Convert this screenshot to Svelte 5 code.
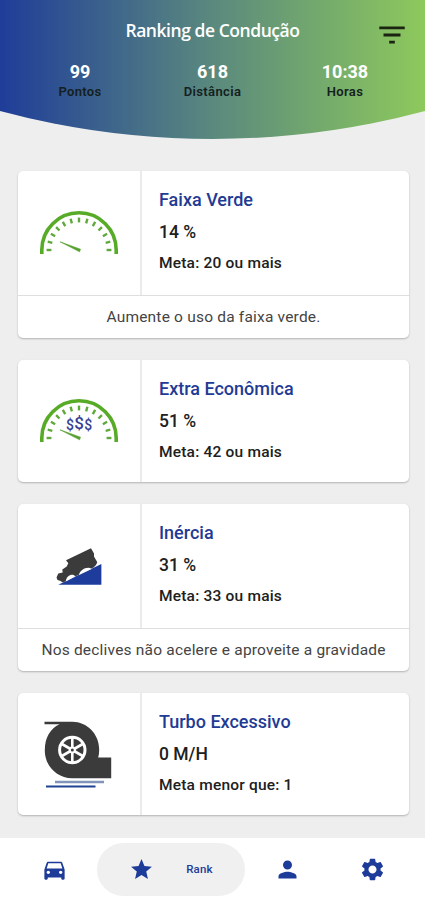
<script lang="ts">
    type Card = {
        icon: 'gauge' | 'economy' | 'slope' | 'turbo';
        title: string;
        value: string;
        goal: string;
        tip?: string;
    };

    const stats = [
        { value: '99', label: 'Pontos' },
        { value: '618', label: 'Distância' },
        { value: '10:38', label: 'Horas' },
    ];

    const cards: Card[] = [
        {
            icon: 'gauge',
            title: 'Faixa Verde',
            value: '14 %',
            goal: 'Meta: 20 ou mais',
            tip: 'Aumente o uso da faixa verde.',
        },
        { icon: 'economy', title: 'Extra Econômica', value: '51 %', goal: 'Meta: 42 ou mais' },
        {
            icon: 'slope',
            title: 'Inércia',
            value: '31 %',
            goal: 'Meta: 33 ou mais',
            tip: 'Nos declives não acelere e aproveite a gravidade',
        },
        { icon: 'turbo', title: 'Turbo Excessivo', value: '0 M/H', goal: 'Meta menor que: 1' },
    ];

    // 13 ticks, one every 15 degrees
    const ticks = Array.from({ length: 13 }, (_, i) => i * 15);
    const spokes = [0, 60, 120, 180, 240, 300];
</script>

<div class="screen">
    <header class="header">
        <div class="title-bar">
            <h1>Ranking de Condução</h1>
            <button class="filter" aria-label="Filtrar">
                <svg viewBox="0 0 24 24" width="34" height="34">
                    <path d="M10 18h4v-2h-4v2zM3 6v2h18V6H3zm3 7h12v-2H6v2z" />
                </svg>
            </button>
        </div>
        <div class="stats">
            {#each stats as stat}
                <div class="stat">
                    <strong>{stat.value}</strong>
                    <span>{stat.label}</span>
                </div>
            {/each}
        </div>
    </header>

    <main class="cards">
        {#each cards as card (card.title)}
            <section class="card">
                <div class="card-body" class:with-tip={card.tip}>
                    <div class="card-icon">
                        {#if card.icon === 'gauge' || card.icon === 'economy'}
                            <svg viewBox="0 0 80 46" width="80" height="46">
                                <path class="arc" d="M2.8 44V40a37.2 37.2 0 0 1 74.4 0v4" />
                                {#each ticks as angle}
                                    <path class="tick" d="M7.6 40h4.8" transform="rotate({angle} 40 40)" />
                                {/each}
                                <path class="needle" d="M21 31.8L41.5 39.2 40.6 41.8z" />
                                {#if card.icon === 'economy'}
                                    <text class="money" x="31" y="32" font-size="14">$</text>
                                    <text class="money" x="40" y="30.5" font-size="17">$</text>
                                    <text class="money" x="49.2" y="32" font-size="14">$</text>
                                {/if}
                            </svg>
                        {:else if card.icon === 'slope'}
                            <svg viewBox="0 0 48 40" width="48" height="40">
                                <path class="ramp" d="M3.3 38.8L46.4 18v20.800z" />
                                <path
                                    class="dark"
                                    d="M36 2.300L39 7.500V10.500L42.300 16.300 41 19 38.500 21.500 8 36.500 5 34.800 2.500 34 1.500 31.500 3.300 27.500 7.700 26.600 7.300 23.500 11.700 20.500 13.300 17.300 11 14.200z"
                                />
                                <g class="puffs">
                                    <path d="M10.800 35.400C11 29.800 18 26.600 20.400 30.600z" />
                                    <path d="M24 28.900C24.500 24 32.500 19.800 36.600 22.900z" />
                                </g>
                            </svg>
                        {:else}
                            <svg viewBox="0 0 70 67" width="70" height="67">
                                <path
                                    class="dark"
                                    d="M.5.8h27.800C43 .8 55.200 13 55.200 28.400q0 4.500-1 8h13v20.800H28C13 57.200.8 45 .8 29.500.8 16 6.500 7.500 15.500 3.200H.5z"
                                />
                                <circle class="rim" cx="28.300" cy="29" r="12.700" />
                                {#each spokes as angle}
                                    <path class="spoke" d="M28.300 29V17" transform="rotate({angle} 28.3 29)" />
                                {/each}
                                <circle class="hub" cx="28.300" cy="29" r="3.600" />
                                <circle class="dark" cx="28.300" cy="29" r="1.500" />
                                <path class="line-light" d="M11 61H60" />
                                <path class="line-blue" d="M2 65.500H51.500" />
                            </svg>
                        {/if}
                    </div>
                    <div class="card-text">
                        <h2>{card.title}</h2>
                        <p class="value">{card.value}</p>
                        <p class="goal">{card.goal}</p>
                    </div>
                </div>
                {#if card.tip}
                    <p class="tip">{card.tip}</p>
                {/if}
            </section>
        {/each}
    </main>

    <nav class="nav">
        <button aria-label="Veículo">
            <svg viewBox="0 0 24 24" width="27" height="27">
                <path
                    d="M18.920 6.010C18.720 5.420 18.160 5 17.500 5h-11c-.66 0-1.210.42-1.420 1.010L3 12v8c0 .55.45 1 1 1h1c.55 0 1-.45 1-1v-1h12v1c0 .55.45 1 1 1h1c.55 0 1-.45 1-1v-8l-2.080-5.990zM6.500 16c-.83 0-1.500-.67-1.500-1.500S5.670 13 6.500 13s1.500.67 1.500 1.500S7.330 16 6.500 16zm11 0c-.83 0-1.500-.67-1.500-1.500s.67-1.500 1.500-1.500 1.500.67 1.500 1.500-.67 1.500-1.500 1.500zM5 11l1.500-4.500h11L19 11H5z"
                />
            </svg>
        </button>
        <button class="active">
            <svg viewBox="0 0 24 24" width="25" height="25">
                <path d="M12 17.270L18.180 21l-1.640-7.030L22 9.240l-7.190-.61L12 2 9.190 8.630 2 9.240l5.460 4.730L5.820 21z" />
            </svg>
            <span>Rank</span>
        </button>
        <button aria-label="Perfil">
            <svg viewBox="0 0 24 24" width="27" height="27">
                <path d="M12 12c2.210 0 4-1.790 4-4s-1.790-4-4-4-4 1.790-4 4 1.790 4 4 4zm0 2c-2.670 0-8 1.340-8 4v2h16v-2c0-2.660-5.330-4-8-4z" />
            </svg>
        </button>
        <button aria-label="Configurações">
            <svg viewBox="0 0 24 24" width="27" height="27">
                <path
                    d="M19.140 12.940c.04-.3.06-.61.06-.94 0-.32-.02-.64-.07-.94l2.030-1.580c.18-.14.23-.41.12-.61l-1.920-3.320c-.12-.22-.37-.29-.59-.22l-2.390.96c-.5-.38-1.030-.7-1.620-.94l-.36-2.540c-.04-.24-.24-.41-.48-.41h-3.840c-.24 0-.43.17-.47.41l-.36 2.540c-.59.24-1.130.57-1.620.94l-2.390-.96c-.22-.08-.47 0-.59.22L2.740 8.870c-.12.21-.08.47.12.61l2.030 1.580c-.05.3-.09.63-.09.94s.02.64.07.94l-2.030 1.580c-.18.14-.23.41-.12.61l1.920 3.320c.12.22.37.29.59.22l2.390-.96c.5.38 1.030.7 1.620.94l.36 2.540c.05.24.24.41.48.41h3.840c.24 0 .44-.17.47-.41l.36-2.540c.59-.24 1.130-.56 1.620-.94l2.390.96c.22.08.47 0 .59-.22l1.920-3.320c.12-.22.07-.47-.12-.61l-2.010-1.580zM12 15.600c-1.980 0-3.600-1.620-3.600-3.600s1.620-3.600 3.600-3.600 3.600 1.620 3.600 3.600-1.620 3.600-3.600 3.600z"
                />
            </svg>
        </button>
    </nav>
</div>

<style>
    :global(body) {
        background: #eeeeee;
    }

    .screen {
        display: flex;
        flex-direction: column;
        width: 425px;
        height: 900px;
        overflow: hidden;
        background: #eeeeee;
        font-family: Roboto, sans-serif;
        color: #202020;
    }

    h1,
    h2,
    p {
        margin: 0;
    }

    svg {
        display: block;
    }

    button {
        padding: 0;
        border: 0;
        background: none;
        font: inherit;
        color: inherit;
    }

    .header {
        flex: none;
        height: 139px;
        box-sizing: border-box;
        padding-top: 16px;
        background: linear-gradient(90deg, #1f3d99 0%, #5a897e 50%, #8dc95c 100%);
        clip-path: circle(820px at 50% -681px);
    }

    .title-bar {
        display: grid;
        grid-template-columns: 50px 1fr 50px;
        align-items: center;
        height: 38px;
    }

    h1 {
        grid-column: 2;
        padding-bottom: 10px;
        font-family: 'Open Sans', sans-serif;
        font-size: 17.5px;
        line-height: 28px;
        font-weight: 600;
        letter-spacing: -0.45px;
        text-align: center;
        color: #fff;
    }

    .filter {
        justify-self: start;
        fill: #1b2410;
    }

    .stats {
        display: grid;
        grid-template-columns: repeat(3, 132.5px);
        justify-content: center;
        padding-top: 7px;
    }

    .stat {
        display: flex;
        flex-direction: column;
        align-items: center;
    }

    .stat strong {
        font-size: 18px;
        line-height: 21px;
        font-weight: 700;
        color: #fff;
    }

    .stat span {
        font-size: 13px;
        line-height: 19px;
        font-weight: 600;
        letter-spacing: 0.35px;
        color: #14201f;
    }

    .cards {
        display: flex;
        flex: 1;
        flex-direction: column;
        gap: 22px;
        padding: 32px 16px 0 18px;
    }

    .card {
        flex: none;
        border-radius: 5px;
        background: #fff;
        box-shadow: 0 1px 2px rgba(0, 0, 0, 0.25);
    }

    .card-body {
        display: flex;
        height: 122px;
    }

    .card-body.with-tip {
        height: 124px;
        border-bottom: 1px solid #dedede;
    }

    .card-icon {
        display: flex;
        align-items: center;
        justify-content: center;
        width: 122px;
        border-right: 2px solid #ebebeb;
    }

    .card-text {
        padding: 16px 0 0 17px;
    }

    h2 {
        font-size: 18px;
        line-height: 25px;
        font-weight: 500;
        color: #1f3b94;
    }

    .value {
        padding-top: 8px;
        font-size: 17.5px;
        line-height: 25px;
        font-weight: 500;
    }

    .goal {
        padding-top: 6px;
        font-size: 15.5px;
        line-height: 25px;
        font-weight: 500;
        letter-spacing: 0.2px;
    }

    .tip {
        font-size: 15.5px;
        line-height: 42px;
        text-align: center;
        letter-spacing: 0.2px;
        color: #444;
    }

    .arc {
        fill: none;
        stroke: #57ab27;
        stroke-width: 3.6;
    }

    .tick {
        stroke: #5fa83a;
        stroke-width: 2.4;
    }

    .needle {
        fill: #57a030;
        stroke: #57a030;
        stroke-width: 0.6;
    }

    .money {
        font-family: Roboto, sans-serif;
        font-weight: 500;
        text-anchor: middle;
        fill: #363f96;
    }

    .dark {
        fill: #3b3b3b;
    }

    .ramp {
        fill: #1d3c9b;
    }

    .puffs {
        fill: #fff;
    }

    .rim {
        fill: #3b3b3b;
        stroke: #fff;
        stroke-width: 3;
    }

    .spoke {
        stroke: #fff;
        stroke-width: 2.6;
    }

    .hub {
        fill: #fff;
    }

    .line-light {
        stroke: #8294b9;
        stroke-width: 2.6;
    }

    .line-blue {
        stroke: #1f4391;
        stroke-width: 2.2;
    }

    .nav {
        display: grid;
        flex: none;
        grid-template-columns: 86px 148px 84px 86px;
        align-items: center;
        height: 62px;
        padding-left: 11px;
        background: #fff;
        fill: #1d3b98;
        color: #1d3b98;
    }

    .nav button {
        display: flex;
        align-items: center;
        justify-content: center;
        height: 53px;
    }

    .nav .active {
        gap: 32px;
        border-radius: 27px;
        background: #f0f0f0;
    }

    .nav span {
        font-size: 11.5px;
        font-weight: 500;
        letter-spacing: 0.2px;
    }
</style>
